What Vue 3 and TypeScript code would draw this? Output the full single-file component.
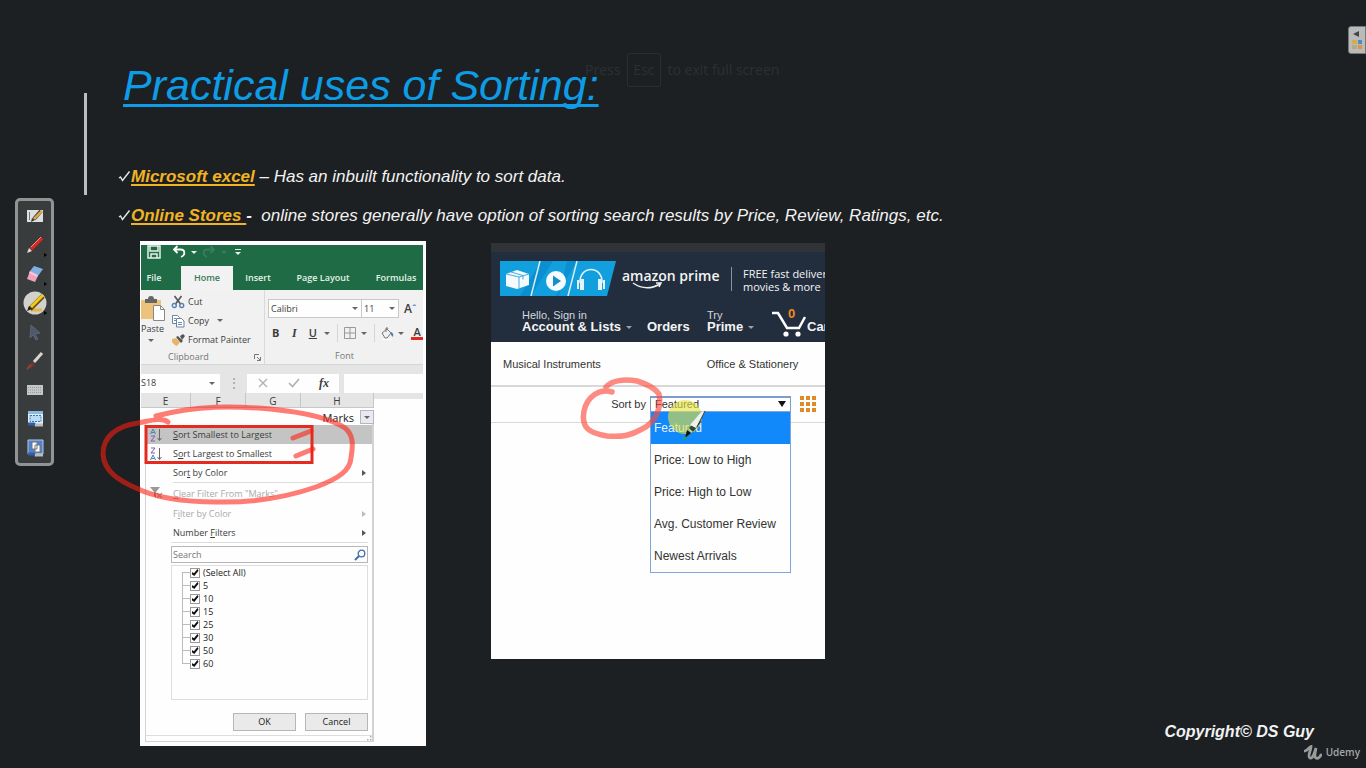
<script setup lang="ts">
import { ref } from 'vue'

interface MenuEntry {
  before: string
  key: string
  after: string
  icon?: 'az' | 'za' | 'clear'
  arrow?: boolean
  disabled?: boolean
  active?: boolean
  divided?: boolean
}

const tabs = ['File', 'Home', 'Insert', 'Page Layout', 'Formulas']
const columns = ['E', 'F', 'G', 'H']

const menu: MenuEntry[] = [
  { before: '', key: 'S', after: 'ort Smallest to Largest', icon: 'az', active: true },
  { before: 'S', key: 'o', after: 'rt Largest to Smallest', icon: 'za' },
  { before: 'Sor', key: 't', after: ' by Color', arrow: true },
  { before: '', key: 'C', after: 'lear Filter From "Marks"', icon: 'clear', disabled: true, divided: true },
  { before: 'F', key: 'i', after: 'lter by Color', arrow: true, disabled: true },
  { before: 'Number ', key: 'F', after: 'ilters', arrow: true },
]

const values = ref(
  ['(Select All)', '5', '10', '15', '25', '30', '50', '60'].map((label) => ({ label, checked: true })),
)

const sortOptions = [
  'Featured',
  'Price: Low to High',
  'Price: High to Low',
  'Avg. Customer Review',
  'Newest Arrivals',
]
const sortBy = ref('Featured')
const search = ref('')
const fontName = ref('Calibri')
const fontSize = ref('11')
const cellName = ref('S18')
const formula = ref('')
</script>

<template>
  <div class="slide">
    <main class="content">
      <h1>Practical uses of Sorting:</h1>

      <ul class="points">
        <li>
          <svg class="tick" viewBox="0 0 13 14"><path d="M1 8 2.500 7 4.500 10.500 11.500 1.500" /></svg>
          <span><b>Microsoft excel</b> – Has an inbuilt functionality to sort data.</span>
        </li>
        <li>
          <svg class="tick" viewBox="0 0 13 14"><path d="M1 8 2.500 7 4.500 10.500 11.500 1.500" /></svg>
          <span><b>Online Stores&nbsp;</b><strong>-</strong>&nbsp; online stores generally have option of sorting search results by Price, Review, Ratings, etc.</span>
        </li>
      </ul>

      <div class="figures">
        <section class="excel" aria-label="Excel filter menu">
          <div class="excel-view">
            <div class="quick">
              <button aria-label="Save">
                <svg width="14" height="14" viewBox="0 0 14 14" fill="none" stroke="#e6f1eb" stroke-width="1.500"><path d="M1 1h12v12H1zM3 1v5h8V1M4 13V9h6v4" /></svg>
              </button>
              <button aria-label="Undo">
                <svg width="14" height="14" viewBox="0 0 14 14" fill="none" stroke="#fff" stroke-width="1.800"><path d="M5.500 1 2 4.500 5.500 8M2 4.500h6.500c5 0 5 6 .5 7.500" /></svg>
              </button>
              <i class="caret light"></i>
              <button aria-label="Redo" class="redo">
                <svg width="14" height="14" viewBox="0 0 14 14" fill="none" stroke="#3a7d5e" stroke-width="1.800"><path d="M8.500 1 12 4.500 8.500 8M12 4.500H5.500c-5 0-5 6-.5 7.500" /></svg>
              </button>
              <i class="caret faint"></i>
              <button aria-label="Customize" class="more"><i class="caret light"></i></button>
            </div>
            <nav class="tabs">
              <button v-for="tab in tabs" :key="tab" :class="{ on: tab === 'Home' }">{{ tab }}</button>
            </nav>

            <div class="ribbon">
              <div class="clipboard">
                <button class="paste">
                  <svg width="26" height="26" viewBox="0 0 26 26"><path fill="#edc27a" d="M0 4h20v19H0z" /><path fill="#666" d="M4 3h3q0-3 3-3t3 3h3v4H4z" /><path fill="#fff" stroke="#888" d="M12.500 9.500h7l4 4v11h-11z" /><path fill="none" stroke="#888" d="M19.500 9.500v4h4" /></svg>
                  <span>Paste</span>
                  <i class="caret"></i>
                </button>
                <div class="commands">
                  <button>
                    <svg width="14" height="14" viewBox="0 0 14 14" fill="none"><path stroke="#555" stroke-width="1.600" d="m3.500 1 6 8M10.500 1l-6 8" /><g stroke="#5581b8" stroke-width="1.400"><circle cx="3.300" cy="10.500" r="2" /><circle cx="10.700" cy="10.500" r="2" /></g></svg>Cut
                  </button>
                  <button>
                    <svg width="14" height="14" viewBox="0 0 14 14" fill="#fff" stroke="#71839b"><path d="M1.500 1.500h5l2 2v6h-7z" /><path d="M5.500 4.500h5l2.500 2.500v6H5.500z" /><path d="M3 4.500h2M3 6.500h2M7 8.500h4M7 10.500h4" stroke="#5b8ec9" /></svg>Copy <i class="caret"></i>
                  </button>
                  <button>
                    <svg width="14" height="14" viewBox="0 0 14 14"><path fill="#ebb365" d="m1 6 4-1 4 4-3 4q-3-1-5-4z" /><path fill="#555" d="m5 4 2-1 5 5-2 2zM9 3l3-2 2 2-3 4z" /></svg>Format Painter
                  </button>
                </div>
                <div class="group-name">Clipboard
                  <svg width="7" height="7" viewBox="0 0 7 7" fill="none" stroke="#777"><path d="M.5 5V.5H5M3 3l3 3M6.500 3v3.500H3" /></svg>
                </div>
              </div>
              <div class="font">
                <div class="font-row">
                  <label class="combo"><input v-model="fontName" aria-label="Font" /><i class="caret"></i></label>
                  <label class="combo size"><input v-model="fontSize" aria-label="Font size" /><i class="caret"></i></label>
                  <button class="grow" aria-label="Increase font size">A<sup>ˆ</sup></button>
                </div>
                <div class="font-row tools">
                  <button><b>B</b></button>
                  <button class="slant"><em>I</em></button>
                  <button class="under">U</button>
                  <i class="caret"></i>
                  <span class="bar"></span>
                  <button aria-label="Borders">
                    <svg width="12" height="12" viewBox="0 0 12 12" fill="none" stroke="#999"><path d="M.5.5h11v11H.5zM6 0v12M0 6h12" /></svg>
                  </button>
                  <i class="caret"></i>
                  <span class="bar"></span>
                  <button aria-label="Fill color">
                    <svg width="13" height="13" viewBox="0 0 13 13" fill="none" stroke="#777"><path d="m1 6 5-4 4 4-4 5H4zM5 5V1q1.500-1 2 1" /><path fill="#477fb8" stroke="none" d="M10 5q3 1 2 5l-2-2z" /><path stroke="#fff" d="M1 12.500h10" /></svg>
                  </button>
                  <i class="caret"></i>
                  <button class="ink">A</button>
                </div>
                <div class="group-name">Font</div>
              </div>
            </div>

            <div class="formula">
              <label class="cell"><input v-model="cellName" aria-label="Name box" /><i class="caret"></i></label>
              <span class="dots">⋮</span>
              <div class="fx">
                <svg width="10" height="10" viewBox="0 0 10 10" fill="none" stroke="#b0b0b0" stroke-width="1.300"><path d="m1 1 8 8M9 1 1 9" /></svg>
                <svg width="12" height="10" viewBox="0 0 12 10" fill="none" stroke="#b0b0b0" stroke-width="1.600"><path d="m1 5 3.500 3.500L11 1" /></svg>
                <em>fx</em>
              </div>
              <input v-model="formula" class="entry" aria-label="Formula" />
            </div>

            <div class="heads">
              <span v-for="c in columns" :key="c">{{ c }}</span>
              <i></i>
            </div>

            <div class="marks">
              <span>Marks</span>
              <button aria-label="Filter"><i class="caret"></i></button>
            </div>

            <div class="menu">
              <button
                v-for="m in menu"
                :key="m.after"
                class="entry-row"
                :class="{ active: m.active, divided: m.divided, off: m.disabled }"
                :disabled="m.disabled"
              >
                <span class="glyph">
                  <svg v-if="m.icon === 'az' || m.icon === 'za'" width="13" height="14" viewBox="0 0 13 14" fill="none">
                    <path v-if="m.icon === 'az'" stroke="#4a7ec0" d="m.5 6 2.500-5 2.500 5M1.500 4.500h3" />
                    <path v-else stroke="#4a7ec0" d="M.5 13 3 8l2.500 5M1.500 11.500h3" />
                    <path v-if="m.icon === 'az'" stroke="#8b5aa8" d="M1 8h4l-4 5h4" />
                    <path v-else stroke="#8b5aa8" d="M1 1h4L1 6h4" />
                    <path stroke="#666" d="M9.500 1v11M7.500 10l2 2.500 2-2.500" />
                  </svg>
                  <svg v-else-if="m.icon === 'clear'" width="13" height="12" viewBox="0 0 13 12"><path fill="#999" d="M0 0h10L6 5v6L4 9V5z" /><path stroke="#aaa" stroke-width="1.500" d="m7 6 5 5M12 6l-5 5" /></svg>
                </span>
                <span class="text">{{ m.before }}<u>{{ m.key }}</u>{{ m.after }}</span>
                <i v-if="m.arrow" class="arrow"></i>
              </button>

              <div class="filter">
                <label class="find">
                  <input v-model="search" placeholder="Search" aria-label="Search" />
                  <svg width="12" height="12" viewBox="0 0 12 12" fill="none" stroke="#3f70ac"><circle cx="7.500" cy="4.500" r="3.300" stroke-width="1.300" /><path stroke-width="2" d="m5 7-4 4" /></svg>
                </label>
                <div class="tree">
                  <label v-for="v in values" :key="v.label"><input v-model="v.checked" type="checkbox" />{{ v.label }}</label>
                </div>
                <div class="actions">
                  <button>OK</button>
                  <button>Cancel</button>
                </div>
              </div>
              <div class="grip"><svg width="7" height="5" viewBox="0 0 7 5" fill="#aaa"><path d="M5 0h1.500v1.500H5zM5 3h1.500v1.500H5zM2 3h1.500v1.500H2z" /></svg></div>
            </div>
          </div>

          <svg class="ink-layer" width="286" height="506" viewBox="0 0 286 506" fill="none">
            <rect x="6" y="185.500" width="166" height="36" stroke="#e52a20" stroke-width="3" />
            <g stroke="#ff1e0f" stroke-opacity=".58" stroke-width="5" stroke-linecap="round" stroke-linejoin="round">
              <path d="M28 181C21 176 9 180-2 182-24 185-37 196-37 213-36 231-20 240-4 247 16 257 45 261 77 261 120 262 153 254 176 246 200 237 210 229 211 217 213 205 214 194 205 187 190 177 161 171 130 168 94 165 58 164 16 175" />
              <path d="m153 197 18-7M156 215l17-7" />
            </g>
          </svg>
        </section>

        <section class="store" aria-label="Online store sorting">
          <div class="store-view">
            <div class="strip"></div>
            <header class="top">
              <div class="promo">
                <svg width="116" height="35" viewBox="0 0 116 35">
                  <path fill="#129fdd" d="M0 0h116l-9 35H0z" />
                  <path fill="#0b8fd0" d="M20 35 41 0h12L31 35zM56 35 77 0H67l-8 35z" />
                  <path stroke="#d8edf6" stroke-width="1.500" d="M40 0 31 35M77 0l-9 35" />
                  <path fill="#f4fafd" d="m6 13 11-4 12 4v11l-12 4-11-3z" />
                  <path stroke="#47addb" fill="none" d="m6 13 13 3 10-3M19 16v11M11 11l12 3.500v4" />
                  <circle cx="56" cy="20" r="10" fill="#f4fafd" />
                  <path fill="#168fc9" d="m53 14.500 8 5.500-8 5.500z" />
                  <path fill="none" stroke="#e4f3fa" stroke-width="1.500" d="M80 22c-1-18 23-18 22 0" />
                  <path fill="#e4f3fa" d="M77 19h2v9h-2zM80 18h4v11h-4zM98 18h4v11h-4zM103 19h2v9h-2z" />
                </svg>
                <div class="brand">amazon prime
                  <svg width="32" height="8" viewBox="0 0 32 8" fill="none" stroke="#eee" stroke-width="1.500"><path d="M1 1q13 9 27 1M24 1l5 0-2 4" /></svg>
                </div>
                <p>FREE fast delivery<br />movies &amp; more</p>
              </div>
              <nav class="account">
                <a href="#" class="lists"><small>Hello, Sign in</small><b>Account &amp; Lists <i class="caret"></i></b></a>
                <a href="#" class="orders"><b>Orders</b></a>
                <a href="#" class="prime"><small>Try</small><b>Prime <i class="caret"></i></b></a>
                <a href="#" class="cart">
                  <svg width="36" height="27" viewBox="0 0 36 27" fill="none" stroke="#fff"><path stroke-width="2.500" d="M1 2h6l9 15h12l6-11" /><g fill="#fff" stroke="none"><circle cx="15" cy="23" r="2.600" /><circle cx="27" cy="23" r="2.600" /></g></svg>
                  <span>0</span><b>Cart</b>
                </a>
              </nav>
            </header>
            <nav class="cats"><a href="#">Musical Instruments</a><a href="#">Office &amp; Stationery</a></nav>
            <div class="sortbar">
              <label for="sort">Sort by</label>
              <div class="picker">
                <select id="sort" v-model="sortBy"><option v-for="o in sortOptions" :key="o">{{ o }}</option></select>
                <i class="down"></i>
                <ul role="listbox" aria-label="Sort options">
                  <li v-for="o in sortOptions" :key="o" role="option" :aria-selected="o === sortBy" @click="sortBy = o">{{ o }}</li>
                </ul>
              </div>
              <button class="gridview" aria-label="Grid view"><i v-for="n in 9" :key="n"></i></button>
            </div>
          </div>

          <svg class="ink-layer" width="334" height="416" viewBox="0 0 334 416">
            <circle cx="194" cy="174" r="17" fill="#e8e23c" fill-opacity=".6" />
            <path fill="none" stroke="#ff4a3c" stroke-opacity=".64" stroke-width="5.500" stroke-linecap="round" stroke-linejoin="round" d="M121 149C108 145 96 154 93 168 90 184 97 190 116 193 132 194 138 193 151 186 164 180 171 165 168 151 164 145 156 141 146 138 134 136 121 137 115 144" />
            <path fill="#111" d="m196 187 4 3-6 5z" />
            <path fill="#34423b" d="m198 185 8-10 4 4-8 10z" />
            <path fill="#eef0eb" d="m199 182 12-14 3 1-9 16z" />
            <path stroke="#333" d="m206 184 8-16" />
            <circle cx="194" cy="195" r="1.500" fill="#28a845" />
          </svg>
        </section>
      </div>
    </main>

    <footer>
      <p class="copyright">Copyright© DS Guy</p>
      <p class="udemy">
        <svg width="18" height="15" viewBox="0 0 18 15" fill="none" stroke="#9a9c9c" stroke-width="2.800" stroke-linecap="round"><path d="M1 6C4 5 5 2 7 1.500 7 5 3 12 6 13c3 1 5-7 6-10-1 5-2 9 0 10 2 1 4-1 5-3" /></svg>
        <span>Udemy</span>
      </p>
    </footer>

    <aside class="toolbox" aria-label="Drawing tools">
      <button aria-label="Sketch">
        <svg viewBox="0 0 24 24"><path fill="#dedfdf" d="M4 6h16v12H4z" /><path stroke="#777" d="M6.500 8v8" /><path stroke="#444" stroke-width="4" d="m11 15 7-8" /><path stroke="#d7aa4d" stroke-width="2.500" d="m11 15 8-8" /><path fill="#333" d="m8 18 1-4 3 2z" /></svg>
      </button>
      <button aria-label="Pen" class="flyout">
        <svg viewBox="0 0 24 24"><path stroke="#d92821" stroke-width="3.500" d="M8 16 19 5" /><path stroke="#ff8c7e" d="M8 14 18 4" /><path fill="#ddd" d="m4 20 2-5 3 3z" /></svg>
      </button>
      <button aria-label="Eraser" class="flyout">
        <svg viewBox="0 0 24 24"><path fill="#f1a1bd" d="m7 9 8 5-3 6-8-3z" /><path fill="#80aee0" d="m11 4 9 3-5 7-8-5z" /><path fill="#f9c6d6" d="m7 9 8 4-1 2-8-4z" /></svg>
      </button>
      <button aria-label="Highlighter" class="flyout chosen">
        <svg viewBox="0 0 24 24"><circle cx="12" cy="12" r="11.500" fill="#d2d2cd" /><path stroke="#e5b44c" stroke-width="3" d="M8 19h11" /><path stroke="#655316" stroke-width="5" d="M7 18 20 5" /><path stroke="#f4ca16" stroke-width="3" d="M8 16 20 4" /><path fill="#222" d="m4 20 2-5 3 3z" /></svg>
      </button>
      <button aria-label="Pointer">
        <svg viewBox="0 0 24 24"><path fill="#51586a" stroke="#5c6374" d="m8 5 9 8-5 1 3 5-2 1-3-5-3 3z" /></svg>
      </button>
      <button aria-label="Brush">
        <svg viewBox="0 0 24 24"><path stroke="#d7d6cf" stroke-width="3" d="m11 13 8-9" /><path stroke="#74342d" stroke-width="4" d="m6 18 5-4" /><path stroke="#86453a" stroke-width="2" d="m4 20 4-4" /></svg>
      </button>
      <button aria-label="Keyboard">
        <svg viewBox="0 0 24 24"><path fill="#c4c6c7" d="M4 7h16v10H4z" /><path stroke="#999" stroke-dasharray="1 1" d="M5 9.500h14M5 12h14M5 14.500h14" /></svg>
      </button>
      <button aria-label="Screen capture">
        <svg viewBox="0 0 24 24"><path fill="#e5edf3" d="M5 4h15v14H5z" /><path fill="#8db9e2" d="M5 4h15v3H5z" /><path fill="#b8ddf3" stroke="#267ac2" stroke-dasharray="2 1" d="M7 8.500h11v6H7z" /><path stroke="#315fa7" stroke-width="3" d="M5 17h6l2 2" /><path stroke="#bbb" stroke-width="3" d="M12 18h8" /></svg>
      </button>
      <button aria-label="Copy capture">
        <svg viewBox="0 0 24 24"><path fill="#4f82cb" stroke="#b8c8df" d="M5 4h15v14H5z" /><path fill="#fff" stroke="#777" d="M9 6h5v7H9zM12 9h5v7h-5z" /><path stroke="#315fa7" stroke-width="3" d="M5 18h6l2 2" /><path stroke="#bbb" stroke-width="3" d="M12 19h8" /></svg>
      </button>
    </aside>

    <button class="side-tab" aria-label="Open panel">
      <svg width="16" height="27" viewBox="0 0 16 27"><path fill="#444" d="m4 7 6-3v6z" /><path fill="#d9ac45" d="M3 13h5v4H3z" /><path fill="#4c8ec0" d="M9 13h4v4H9z" /><path fill="#b3ac80" d="M3 18h5v4H3z" /><path fill="#e19244" d="M9 18h4v4H9z" /></svg>
    </button>

    <div class="hint">Press <kbd>Esc</kbd> to exit full screen</div>
  </div>
</template>

<style>
body {
  margin: 0;
  background: #1c2022;
}
</style>

<style scoped>
* {
  box-sizing: border-box;
}
button,
input,
select {
  font: inherit;
  color: inherit;
  border: 0;
  padding: 0;
  margin: 0;
  background: none;
  border-radius: 0;
  outline: none;
  min-width: 0;
}
button {
  display: flex;
  align-items: center;
  white-space: nowrap;
}
svg {
  display: block;
  flex: none;
}
p,
h1,
ul {
  margin: 0;
  padding: 0;
}
a {
  color: inherit;
  text-decoration: none;
}
.slide {
  position: relative;
  min-height: 100vh;
  display: flex;
  flex-direction: column;
  overflow: hidden;
  background: #1c2022;
  font-family: "Liberation Sans", Arial, sans-serif;
  color: #f2f2f2;
}
.slide::before {
  content: "";
  position: absolute;
  left: 84px;
  top: 93px;
  width: 3px;
  height: 102px;
  background: #bcbebe;
}
.content {
  padding: 61px 32px 0 118px;
}
h1 {
  padding-left: 5px;
  font-size: 43px;
  line-height: 48px;
  font-weight: 400;
  font-style: italic;
  color: #0d9ce5;
  text-decoration: underline;
  text-decoration-thickness: 3px;
  text-underline-offset: 4px;
  text-decoration-skip-ink: none;
}
.points {
  margin-top: 48px;
  list-style: none;
  font-size: 17px;
  line-height: 39px;
  font-style: italic;
}
.points li {
  display: flex;
  align-items: center;
}
.points .tick {
  width: 13px;
  height: 14px;
  fill: none;
  stroke: #e4e4e4;
  stroke-width: 1.500;
}
.points b {
  color: #f0b323;
  text-decoration: underline;
  text-decoration-thickness: 2px;
  text-underline-offset: 2px;
  text-decoration-skip-ink: none;
}
.figures {
  display: flex;
  align-items: flex-start;
  gap: 65px;
  margin: 6px 0 0 22px;
}
.ink-layer {
  position: absolute;
  left: 0;
  top: 0;
  overflow: visible;
  pointer-events: none;
}

.caret {
  display: inline-block;
  flex: none;
  border: 3px solid transparent;
  border-top-color: #666;
  border-bottom: 0;
}
.caret.light {
  border-top-color: #e6f1eb;
}
.caret.faint {
  border-top-color: #3a7d5e;
}

/* Spreadsheet */
.excel {
  position: relative;
  width: 286px;
  background: #fdfefd;
  padding: 4px 3px 4px 1px;
  font-family: "Open Sans", "Noto Sans", sans-serif;
  font-size: 9px;
  line-height: 12px;
  color: #3c3c3c;
}
.excel-view {
  overflow: hidden;
}
.quick {
  display: flex;
  align-items: center;
  gap: 5px;
  height: 21px;
  padding: 0 6px 7px;
  background: #1e6b45;
}
.quick button:nth-child(2) {
  margin-left: 6px;
}
.quick .more {
  margin-left: 3px;
  padding-top: 2px;
  border-top: 1px solid #e6f1eb;
}
.tabs {
  display: flex;
  height: 24px;
  background: #1e6b45;
  color: #e6f1eb;
}
.tabs button {
  justify-content: center;
  flex: none;
  width: 50px;
  font-weight: 600;
}
.tabs button:nth-child(1) {
  width: 26px;
  margin-right: 14px;
}
.tabs button:nth-child(2) {
  width: 52px;
}
.tabs button:nth-child(4) {
  width: 80px;
}
.tabs button:nth-child(5) {
  width: 66px;
}
.tabs .on {
  background: #f1f2f1;
  color: #39795a;
}
.ribbon {
  display: flex;
  height: 75px;
  background: #f0f1f0;
  border-bottom: 1px solid #d5d6d5;
}
.clipboard {
  display: grid;
  grid-template: 58px 14px / 30px 1fr;
  flex: none;
  width: 124px;
  padding-top: 2px;
  border-right: 1px solid #d9dad9;
}
.paste {
  flex-direction: column;
  align-items: flex-start;
  justify-content: flex-start;
  padding-top: 4px;
}
.paste span {
  line-height: 14px;
}
.paste .caret {
  margin: 3px 0 0 7px;
}
.commands button {
  height: 19px;
  gap: 3px;
}
.commands .caret {
  margin-left: 5px;
}
.group-name {
  display: flex;
  align-items: center;
  justify-content: center;
  color: #777;
}
.clipboard .group-name {
  grid-column: 1 / 3;
  justify-content: space-between;
  padding: 0 3px 0 27px;
}
.font {
  flex: none;
  width: 158px;
  padding: 9px 0 0 3px;
}
.font-row {
  display: flex;
  align-items: center;
}
.combo {
  display: flex;
  align-items: center;
  width: 94px;
  height: 19px;
  padding: 0 3px 0 2px;
  border: 1px solid #c8c9c8;
  background: #fdfefd;
}
.combo input {
  flex: 1;
}
.combo.size {
  width: 38px;
  margin-left: -1px;
}
.grow {
  margin-left: 5px;
  font-size: 12px;
  font-weight: 600;
}
.grow sup {
  color: #4a7ec0;
  line-height: 6px;
}
.tools {
  height: 30px;
  padding-left: 2px;
  gap: 7px;
  font-size: 11px;
}
.tools button {
  justify-content: center;
  width: 12px;
}
.tools .slant {
  font-family: "Liberation Serif", serif;
  font-weight: 700;
  font-size: 12px;
}
.tools .under {
  font-weight: 600;
  text-decoration: underline;
}
.tools .caret {
  margin-left: -2px;
}
.tools .bar {
  width: 1px;
  height: 18px;
  background: #d5d6d5;
}
.tools .ink {
  border-bottom: 3px solid #e22b1f;
  font-weight: 600;
  line-height: 11px;
}
.font .group-name {
  height: 16px;
  padding-right: 2px;
}
.formula {
  display: flex;
  align-items: center;
  height: 28px;
  padding-top: 8px;
  background: #e4e5e4;
}
.formula > * {
  height: 19px;
  background: #fdfefd;
}
.cell {
  display: flex;
  align-items: center;
  width: 79px;
  padding-right: 5px;
}
.cell input {
  flex: 1;
}
.formula .dots {
  width: 27px;
  background: none;
  text-align: center;
  font-size: 12px;
  line-height: 18px;
  color: #999;
}
.fx {
  display: flex;
  align-items: center;
  justify-content: space-between;
  width: 92px;
  padding: 0 10px 0 11px;
}
.fx em {
  font-family: "Liberation Serif", serif;
  font-weight: 700;
  font-size: 12px;
}
.formula .entry {
  flex: 1;
  margin-left: 5px;
}
.heads {
  display: flex;
  align-items: flex-start;
}
.heads span {
  width: 55px;
  height: 15px;
  padding-top: 2px;
  border-right: 1px solid #c6c7c6;
  border-bottom: 1px solid #c6c7c6;
  background: #e4e5e4;
  text-align: center;
  font-size: 10px;
}
.heads span:nth-child(1) {
  width: 50px;
}
.heads span:nth-child(4) {
  width: 73px;
}
.heads i {
  flex: 1;
  height: 6px;
  background: #e4e5e4;
}
.marks {
  display: flex;
  align-items: flex-end;
  justify-content: flex-end;
  gap: 6px;
  height: 16px;
  margin-right: 49px;
  font-size: 11px;
  color: #222;
}
.marks button {
  justify-content: center;
  width: 14px;
  height: 14px;
  border: 1px solid #b5b6c0;
  background: #e9eaf0;
}
.menu {
  margin: 0 49px 0 4px;
  border: 1px solid #d2d3d2;
  border-top: 0;
  border-right-width: 2px;
  padding-top: 1px;
}
.entry-row {
  width: 100%;
  height: 19px;
}
.entry-row.active {
  background: #c3c4c3;
}
.entry-row.divided {
  height: 22px;
}
.entry-row.off {
  color: #aaa;
}
.entry-row .glyph {
  width: 27px;
  padding-left: 4px;
}
.entry-row .text {
  flex: 1;
  text-align: left;
}
.entry-row u {
  text-underline-offset: 1px;
}
.entry-row.divided .text {
  line-height: 21px;
  border-top: 1px solid #dcdddc;
}
.arrow {
  margin-right: 6px;
  border: 3px solid transparent;
  border-left: 4px solid #555;
  border-right: 0;
}
.off .arrow {
  border-left-color: #bbb;
}
.filter {
  margin: 0 4px 0 25px;
  padding-top: 3px;
  border-top: 1px solid #dcdddc;
}
.find {
  display: flex;
  align-items: center;
  height: 17px;
  padding: 0 1px;
  border: 1px solid #b5b6b5;
}
.find input {
  flex: 1;
}
.find input::placeholder {
  color: #777;
  opacity: 1;
}
.tree {
  height: 135px;
  margin-top: 2px;
  padding-left: 10px;
  border: 1px solid #dcdddc;
}
.tree label {
  display: flex;
  align-items: center;
  height: 13px;
  gap: 3px;
  color: #222;
  position: relative;
  padding-left: 8px;
}
.tree label::before {
  content: "";
  position: absolute;
  left: 0;
  top: 0;
  width: 8px;
  height: 13px;
  border-left: 1px solid #bbb;
  background: linear-gradient(#bbb, #bbb) 0 6px / 8px 1px no-repeat;
}
.tree label:first-child::before {
  top: 6px;
  height: 7px;
  background-position: 0 0;
}
.tree label:last-child::before {
  height: 7px;
}
.tree input {
  appearance: none;
  width: 10px;
  height: 10px;
  border: 1px solid #999;
  display: grid;
  place-items: center;
}
.tree input:checked::before {
  content: "";
  width: 7px;
  height: 7px;
  background: #111;
  clip-path: polygon(0 40%, 35% 60%, 85% 0, 100% 25%, 40% 100%, 0 70%);
}
.actions {
  display: flex;
  justify-content: flex-end;
  gap: 9px;
  padding: 13px 0 4px;
}
.actions button {
  justify-content: center;
  width: 63px;
  height: 18px;
  border: 1px solid #b5b6b5;
  background: #e9eae9;
  color: #222;
}
.grip {
  display: flex;
  justify-content: flex-end;
  height: 6px;
  border-top: 1px solid #dcdddc;
}

/* Store */
.store {
  position: relative;
  width: 334px;
  margin-top: 2px;
  font-size: 11px;
  color: #333;
}
.store-view {
  min-height: 416px;
  overflow: hidden;
  background: #fdfefd;
}
.strip {
  height: 9px;
  background: #313436;
}
.top {
  height: 90px;
  padding-top: 9px;
  background: #222e3e;
  color: #f4f4f4;
  white-space: nowrap;
}
.promo {
  display: flex;
  padding-left: 9px;
  font-family: "Open Sans", "Noto Sans", sans-serif;
}
.brand {
  flex: none;
  width: 115px;
  padding: 5px 0 0 6px;
  font-size: 14px;
  line-height: 20px;
  font-weight: 600;
}
.brand svg {
  margin: -4px 0 0 10px;
}
.promo p {
  height: 24px;
  margin-top: 6px;
  padding-left: 11px;
  border-left: 1px solid #8b939d;
  font-size: 11px;
  line-height: 13px;
}
.account {
  display: flex;
  align-items: flex-end;
  height: 37px;
  padding-left: 31px;
}
.account a {
  display: flex;
  flex: none;
  flex-direction: column;
  font-size: 13px;
  line-height: 13px;
}
.account small {
  font-size: 11px;
  line-height: 10px;
  color: #d5d8dc;
}
.account .caret {
  margin: 0 0 2px 1px;
  border-top-color: #9aa3ad;
}
.account .lists {
  width: 125px;
}
.account .orders {
  width: 60px;
}
.account .prime {
  width: 64px;
}
.account .cart {
  position: relative;
  flex-direction: row;
  align-items: flex-end;
}
.cart svg {
  margin-bottom: -5px;
}
.cart span {
  position: absolute;
  left: 17px;
  top: -4px;
  color: #ee8b1c;
  font-weight: 700;
}
.cats {
  display: flex;
  align-items: center;
  gap: 106px;
  height: 45px;
  padding-left: 12px;
  border-bottom: 2px solid #d7d8d7;
  white-space: nowrap;
}
.sortbar {
  display: flex;
  align-items: center;
  justify-content: flex-end;
  height: 36px;
  padding: 0 9px 2px 0;
  border-bottom: 1px solid #d7d8d7;
}
.picker {
  position: relative;
  width: 141px;
  margin: 0 9px 0 4px;
  font-size: 12px;
}
.picker select {
  appearance: none;
  display: block;
  width: 100%;
  height: 16px;
  padding-left: 4px;
  border: 1px solid #7c9bd0;
  border-top-width: 2px;
  font-size: 11px;
  line-height: 13px;
}
.down {
  position: absolute;
  right: 5px;
  top: 5px;
  border: 4px solid transparent;
  border-top: 6px solid #111;
  border-bottom: 0;
}
.picker ul {
  position: absolute;
  left: 0;
  top: 15px;
  width: 100%;
  list-style: none;
  border: 1px solid #7fa6dc;
  background: #fdfefd;
}
.picker li {
  padding-left: 3px;
  line-height: 32px;
}
.picker li[aria-selected="true"] {
  background: #1289fb;
  color: #e8f2fb;
}
.gridview {
  display: grid;
  grid-template-columns: repeat(3, 4px);
  gap: 2px;
}
.gridview i {
  height: 4px;
  background: #df8a25;
}

/* Footer */
footer {
  position: absolute;
  right: 0;
  bottom: 6px;
  display: flex;
  flex-direction: column;
  align-items: flex-end;
  padding-right: 6px;
}
.copyright {
  padding-right: 46px;
  font-size: 16px;
  line-height: 20px;
  font-weight: 700;
  font-style: italic;
}
.udemy {
  display: flex;
  align-items: center;
  gap: 4px;
  font: 600 10px/20px "Open Sans", sans-serif;
  color: #a5a7a7;
}

/* Floating overlays */
.toolbox {
  position: absolute;
  left: 15px;
  top: 198px;
  display: flex;
  flex-direction: column;
  align-items: center;
  gap: 5px;
  width: 39px;
  padding: 3px 0;
  border: 3px solid #929494;
  border-radius: 5px;
  background: #393c3c;
}
.toolbox button {
  position: relative;
}
.toolbox svg {
  width: 24px;
  height: 24px;
  fill: none;
}
.flyout::after {
  content: "";
  position: absolute;
  right: 0;
  bottom: 0;
  border: 2px solid transparent;
  border-left: 3px solid #000;
  border-right: 0;
}
.side-tab {
  position: absolute;
  right: 0;
  top: 26px;
  width: 18px;
  height: 28px;
  border: 1px solid #777;
  border-radius: 3px 0 0 3px;
  background: #b9baba;
}
.hint {
  position: absolute;
  left: 585px;
  top: 53px;
  display: flex;
  align-items: center;
  gap: 7px;
  font: 14px/32px "Open Sans", sans-serif;
  color: #2c3032;
}
.hint kbd {
  padding: 0 5px;
  border: 1px solid #2a2e30;
  border-radius: 2px;
  font: inherit;
}
</style>
